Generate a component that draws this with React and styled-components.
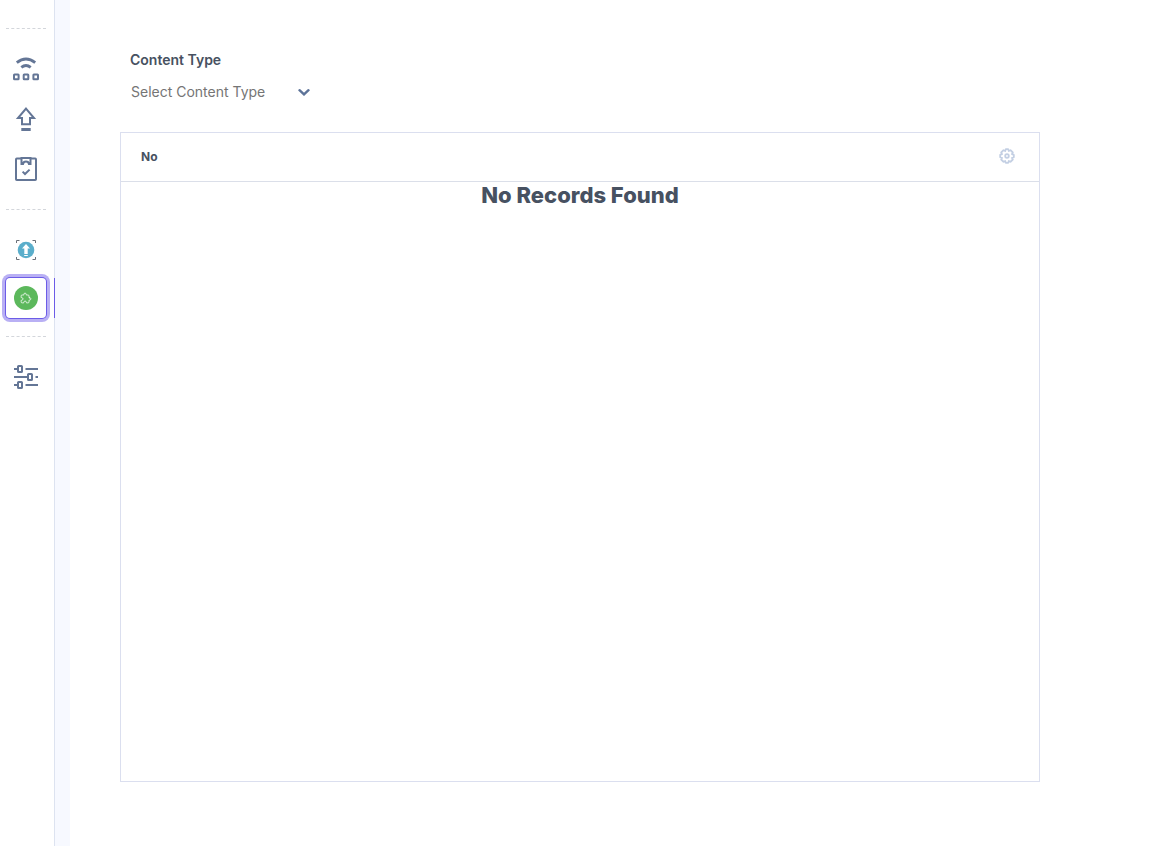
import styled, { createGlobalStyle } from "styled-components";
import { IoExtensionPuzzleOutline } from "react-icons/io5";

const GlobalStyle = createGlobalStyle`
  * {
    box-sizing: border-box;
  }

  body {
    margin: 0;
    background-color: #ffffff;
    color: #475161;
    font-family: Inter, "Liberation Sans", sans-serif;
  }
`;

const Page = styled.div`
  display: flex;
  min-height: 100vh;
`;

const Sidebar = styled.nav`
  width: 55px;
  flex-shrink: 0;
  padding: 28px 8px 0 6px;
  border-right: 1px solid #dde3f0;
`;

const Divider = styled.hr`
  margin: 0;
  border: 0;
  border-top: 1px dashed #d3d6db;
`;

const NavGroup = styled.div`
  display: flex;
  flex-direction: column;
  gap: ${(props) => (props.$tight ? "8px" : "10px")};
  padding: 20px 0 ${(props) => (props.$tight ? "18px" : "20px")};
`;

const NavButton = styled.button`
  position: relative;
  display: flex;
  align-items: center;
  justify-content: center;
  width: 40px;
  height: 40px;
  padding: 0;
  border: 0;
  border-radius: 4px;
  background-color: #ffffff;
  color: #647696;
  cursor: pointer;
  box-shadow: ${(props) =>
    props.$active ? "0 0 0 1px #6c5ce7, 0 0 0 4px #b9b0f4" : "none"};

  /* marks the open section on the sidebar edge */
  &::after {
    content: "";
    display: ${(props) => (props.$active ? "block" : "none")};
    position: absolute;
    top: 0;
    right: -9px;
    width: 1px;
    height: 100%;
    background-color: #6c5ce7;
  }
`;

const AppBadge = styled.span`
  display: flex;
  align-items: center;
  justify-content: center;
  width: 24px;
  height: 24px;
  border-radius: 50%;
  background-color: #5cb85c;
  color: #ffffff;

  svg {
    stroke: currentColor;
    stroke-width: 12px;
  }
`;

const Gutter = styled.div`
  width: 15px;
  flex-shrink: 0;
  background-color: #f7f9ff;
`;

const Content = styled.main`
  flex: 1;
  min-width: 0;
  padding: 50px 119px 64px 50px;
`;

const Field = styled.div`
  display: flex;
  flex-direction: column;
  align-items: flex-start;
  padding: 0 10px;
  margin-bottom: 24px;
`;

const Label = styled.label`
  font-size: 14px;
  font-weight: 600;
  line-height: 20px;
`;

const SelectBox = styled.div`
  display: grid;
  grid-template-columns: 160px 28px;
  align-items: center;
  margin-top: 6px;
  color: #5d7399;
`;

const Select = styled.select`
  grid-area: 1 / 1 / 2 / 3;
  width: 100%;
  height: 32px;
  padding: 0 28px 2px 1px;
  border: 0;
  appearance: none;
  background: transparent;
  color: #757575;
  font-family: inherit;
  font-size: 14px;
`;

const ChevronCell = styled.span`
  grid-area: 1 / 2 / 2 / 3;
  display: flex;
  justify-content: center;
  pointer-events: none;
`;

const Table = styled.table`
  width: 100%;
  height: 650px;
  border: 1px solid #dbdfef;
  border-spacing: 0;
`;

const HeadCell = styled.th`
  height: 49px;
  padding: 0 ${(props) => (props.$end ? "24px" : "20px")};
  border-bottom: 1px solid #dbdfe9;
  font-size: 12px;
  font-weight: 700;
  line-height: 16px;
  text-align: ${(props) => (props.$end ? "right" : "left")};
`;

const GearButton = styled.button`
  display: inline-flex;
  padding: 0 0 2px;
  border: 0;
  background: transparent;
  color: #c3cfe3;
  vertical-align: middle;
  cursor: pointer;
`;

const EmptyCell = styled.td`
  padding: 0;
  text-align: center;
  vertical-align: top;
`;

const EmptyTitle = styled.h2`
  margin: 0;
  font-size: 22px;
  font-weight: 800;
  line-height: 26px;
`;

function NavIcon({ children }) {
  return (
    <svg
      width="40"
      height="40"
      viewBox="0 0 40 40"
      fill="none"
      stroke="currentColor"
      strokeWidth="2"
      aria-hidden="true"
    >
      {children}
    </svg>
  );
}

function ChannelsIcon() {
  return (
    <NavIcon>
      <path d="M10.8 13.7Q20 6.2 29.2 13.7" strokeWidth="2.8" />
      <path d="M15.3 18.4Q20 14.6 24.7 18.4" strokeWidth="2.8" />
      <rect x="8" y="25.6" width="4.6" height="4.6" rx="0.5" />
      <rect x="17.7" y="25.6" width="4.6" height="4.6" rx="0.5" />
      <rect x="27.4" y="25.6" width="4.6" height="4.6" rx="0.5" />
    </NavIcon>
  );
}

function PublishIcon() {
  return (
    <NavIcon>
      <path d="M20 9.6L28 19H24V25.2H16V19H12Z" />
      <path d="M15.3 30.5H24.7" strokeWidth="3" />
    </NavIcon>
  );
}

function TasksIcon() {
  return (
    <NavIcon>
      <rect x="10" y="9.6" width="20" height="21.4" rx="0.8" />
      <path d="M15.5 9H24.5V15H23Q22.6 12.6 20 12.6Q17.4 12.6 17 15H15.5Z" fill="#fff" />
      <path d="M16.6 22.6L19 25L23.6 20.6" />
    </NavIcon>
  );
}

function UploadAppIcon() {
  return (
    <NavIcon>
      <path
        d="M10.5 13V10.5H13.5M26.5 10.5H29.5V13M29.5 27V29.5H26.5M13.5 29.5H10.5V27"
        stroke="#6b7078"
        strokeWidth="1"
      />
      <circle cx="20" cy="20" r="8.3" fill="#5aaecb" stroke="none" />
      <path d="M20 14L24 18.4H21.7V24H18.3V18.4H16Z" fill="#fff" stroke="none" />
      <path d="M18.2 25.5H21.8" stroke="#fff" strokeWidth="1" />
    </NavIcon>
  );
}

function SettingsIcon() {
  return (
    <NavIcon>
      <path d="M8 12H12M19.5 12H32M8 20H21M29.5 20H32M8 28H12M19.5 28H32" />
      <rect x="12" y="9" width="4" height="6" rx="0.6" />
      <rect x="22" y="17" width="4" height="6" rx="0.6" />
      <rect x="12" y="25" width="4" height="6" rx="0.6" />
    </NavIcon>
  );
}

function GearIcon() {
  return (
    <svg
      width="16"
      height="16"
      viewBox="0 0 16 16"
      fill="none"
      stroke="currentColor"
      strokeWidth="1.8"
      strokeLinejoin="round"
      aria-hidden="true"
    >
      <path d="M6.8 1.2H9.2L9.8 3L11.5 2.2L13.8 4.5L13 6.2L14.8 6.8V9.2L13 9.8L13.8 11.5L11.5 13.8L9.8 13L9.2 14.8H6.8L6.2 13L4.5 13.8L2.2 11.5L3 9.8L1.2 9.2V6.8L3 6.2L2.2 4.5L4.5 2.2L6.2 3Z" />
      <circle cx="8" cy="8" r="1.8" />
    </svg>
  );
}

export default function App() {
  return (
    <Page>
      <GlobalStyle />

      <Sidebar aria-label="Main">
        <Divider />
        <NavGroup>
          <NavButton type="button" aria-label="Channels">
            <ChannelsIcon />
          </NavButton>
          <NavButton type="button" aria-label="Publish queue">
            <PublishIcon />
          </NavButton>
          <NavButton type="button" aria-label="Tasks">
            <TasksIcon />
          </NavButton>
        </NavGroup>
        <Divider />
        <NavGroup $tight>
          <NavButton type="button" aria-label="Upload app">
            <UploadAppIcon />
          </NavButton>
          <NavButton type="button" aria-label="Extension app" $active>
            <AppBadge>
              <IoExtensionPuzzleOutline size={12} />
            </AppBadge>
          </NavButton>
        </NavGroup>
        <Divider />
        <NavGroup>
          <NavButton type="button" aria-label="Settings">
            <SettingsIcon />
          </NavButton>
        </NavGroup>
      </Sidebar>

      <Gutter />

      <Content>
        <Field>
          <Label htmlFor="content-type">Content Type</Label>
          <SelectBox>
            <Select id="content-type" defaultValue="">
              <option value="">Select Content Type</option>
            </Select>
            <ChevronCell>
              <svg width="12" height="8" viewBox="0 0 12 8" fill="none" aria-hidden="true">
                <path
                  d="M1.5 2.2L6 6.4L10.5 2.2"
                  stroke="currentColor"
                  strokeWidth="2.4"
                  strokeLinecap="round"
                />
              </svg>
            </ChevronCell>
          </SelectBox>
        </Field>

        <Table>
          <thead>
            <tr>
              <HeadCell scope="col">No</HeadCell>
              <HeadCell $end>
                <GearButton type="button" aria-label="Table settings">
                  <GearIcon />
                </GearButton>
              </HeadCell>
            </tr>
          </thead>
          <tbody>
            <tr>
              <EmptyCell colSpan={2}>
                <EmptyTitle>No Records Found</EmptyTitle>
              </EmptyCell>
            </tr>
          </tbody>
        </Table>
      </Content>
    </Page>
  );
}
